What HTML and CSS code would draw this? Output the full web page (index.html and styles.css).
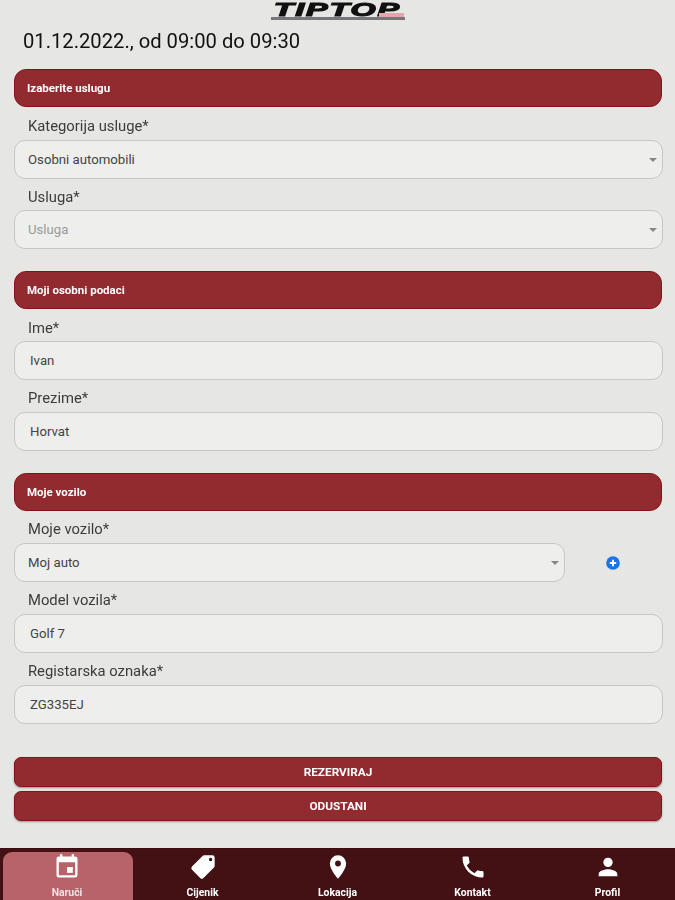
FILE: index.html
```html
<!DOCTYPE html>
<html lang="hr">
<head>
<meta charset="utf-8">
<title>Naruči</title>
<link rel="stylesheet" href="styles.css">
</head>
<body>
<div class="page">
  <main class="content">
    <header class="logo-row">
      <div class="logo"><span class="logo-text">TIPTOP</span><span class="logo-red"></span></div>
    </header>
    <h1 class="date">01.12.2022., od 09:00 do 09:30</h1>

    <section class="section">
      <h2 class="bar">Izaberite uslugu</h2>
      <div class="label">Kategorija usluge*</div>
      <div class="field"><span>Osobni automobili</span><i class="caret"></i></div>
      <div class="label">Usluga*</div>
      <div class="field muted"><span>Usluga</span><i class="caret"></i></div>
    </section>

    <section class="section">
      <h2 class="bar">Moji osobni podaci</h2>
      <div class="label">Ime*</div>
      <div class="field input"><span>Ivan</span></div>
      <div class="label">Prezime*</div>
      <div class="field input"><span>Horvat</span></div>
    </section>

    <section class="section">
      <h2 class="bar">Moje vozilo</h2>
      <div class="label">Moje vozilo*</div>
      <div class="vehicle-row">
        <div class="field grow"><span>Moj auto</span><i class="caret"></i></div>
        <div class="add-slot">
          <svg class="add" viewBox="0 0 14 14" width="14" height="14"><circle cx="7" cy="7" r="6.8" fill="#1a73e8"/><path d="M7 3.8v6.4M3.8 7h6.4" stroke="#fff" stroke-width="1.9"/></svg>
        </div>
      </div>
      <div class="label">Model vozila*</div>
      <div class="field input"><span>Golf 7</span></div>
      <div class="label tall">Registarska oznaka*</div>
      <div class="field input"><span>ZG335EJ</span></div>
    </section>

    <div class="actions">
      <button class="btn">REZERVIRAJ</button>
      <button class="btn">ODUSTANI</button>
    </div>
  </main>

  <nav class="tabs">
    <a class="tab active">
      <svg viewBox="0 0 24 24" width="28" height="28"><path fill="#fff" d="M19 3h-1V1h-2v2H8V1H6v2H5a2 2 0 0 0-2 2v14a2 2 0 0 0 2 2h14a2 2 0 0 0 2-2V5a2 2 0 0 0-2-2zm0 16H5V8h14v11z"/><rect x="12" y="12" width="5" height="5" fill="#fff"/></svg>
      <span>Naruči</span>
    </a>
    <a class="tab">
      <svg viewBox="0 0 24 24" width="28" height="28"><path fill="#fff" d="M21.41 11.58l-9-9A2 2 0 0 0 11 2H4a2 2 0 0 0-2 2v7c0 .55.22 1.05.59 1.42l9 9a2 2 0 0 0 2.82 0l7-7a2 2 0 0 0 0-2.84zM5.5 7A1.5 1.5 0 1 1 5.5 4a1.5 1.5 0 0 1 0 3z" transform="matrix(0 1 -1 0 24 0)"/></svg>
      <span>Cijenik</span>
    </a>
    <a class="tab">
      <svg viewBox="0 0 24 24" width="28" height="28"><path fill="#fff" d="M12 2a7 7 0 0 0-7 7c0 5.25 7 13 7 13s7-7.75 7-13a7 7 0 0 0-7-7zm0 9.5a2.5 2.5 0 1 1 0-5 2.5 2.5 0 0 1 0 5z"/></svg>
      <span>Lokacija</span>
    </a>
    <a class="tab">
      <svg viewBox="0 0 24 24" width="28" height="28"><path fill="#fff" d="M6.62 10.79a15.15 15.15 0 0 0 6.59 6.59l2.2-2.2a1 1 0 0 1 1.02-.24 11.4 11.4 0 0 0 3.57.57 1 1 0 0 1 1 1V20a1 1 0 0 1-1 1A17 17 0 0 1 3 4a1 1 0 0 1 1-1h3.5a1 1 0 0 1 1 1c0 1.25.2 2.45.57 3.57a1 1 0 0 1-.25 1.02l-2.2 2.2z"/></svg>
      <span>Kontakt</span>
    </a>
    <a class="tab">
      <svg viewBox="0 0 24 24" width="28" height="28"><path fill="#fff" d="M12 12a4 4 0 1 0 0-8 4 4 0 0 0 0 8zm0 2c-2.67 0-8 1.34-8 4v2h16v-2c0-2.66-5.33-4-8-4z"/></svg>
      <span>Profil</span>
    </a>
  </nav>
</div>
</body>
</html>
```
FILE: styles.css
```css
* { box-sizing: border-box; }
html, body { margin: 0; padding: 0; }
body { background: #e6e6e4; font-family: Roboto, "Liberation Sans", sans-serif; color: #222; }
.page { width: 675px; height: 900px; display: flex; flex-direction: column; overflow: hidden; filter: blur(0.5px); }
.content { flex: 1; padding: 0 12px 0 14px; }

.logo-row { height: 21px; display: flex; justify-content: center; padding-right: 2px; }
.logo { position: relative; width: 134px; height: 20px; padding-top: 1px; border-bottom: 3px solid #77777a; text-align: center; }
.logo-text { display: inline-block; font: italic 700 18px/16px "Liberation Sans", sans-serif; letter-spacing: 1px; color: #111; -webkit-text-stroke: 1.1px #111; transform: scaleX(1.8); }
.logo-red { position: absolute; right: 1px; bottom: 0; width: 25px; height: 4px; background: #e3a6ac; }

.date { margin: 9px 0 0 9px; height: 22px; font-size: 20.2px; line-height: 22px; font-weight: 400; color: #111; white-space: nowrap; }

.section { margin-bottom: 22px; }
.date + .section { margin-top: 17.2px; }
.bar { margin: 0; height: 38px; width: 648px; padding-left: 12px; display: flex; align-items: center; background: #922b30; border: 1px solid #8a1118; border-radius: 12px; color: #fff; font-size: 11.5px; font-weight: 700; }
.label { height: 31.5px; padding: 8px 0 0 14px; font-size: 14.8px; line-height: 20px; color: #3c3c3c; white-space: nowrap; }
.bar + .label { height: 32.4px; padding-top: 8.5px; }
.label.tall { height: 31.8px; }
.field { position: relative; display: flex; align-items: center; width: 649px; height: 39px; padding: 0 13px; background: #eeeeed; border: 1px solid #c6c6c4; border-radius: 11px; font-size: 13.2px; color: #444; }
.field.input { padding-left: 15px; }
.field.muted { color: #9a9a9a; }
.caret { position: absolute; right: 5px; top: 17px; width: 0; height: 0; border-left: 4px solid transparent; border-right: 4px solid transparent; border-top: 4px solid #85858a; }
.vehicle-row { display: flex; align-items: center; }
.field.grow { width: 551px; flex: none; }
.add-slot { flex: 1; display: flex; padding-left: 41px; }

.actions { display: flex; flex-direction: column; gap: 4px; margin-top: 33px; }
.btn { width: 648px; height: 30px; padding: 0; background: #922b30; border: 1px solid #8a1118; border-radius: 7px; color: #fff; font: 700 11.8px Roboto, "Liberation Sans", sans-serif; box-shadow: 0 1px 2px rgba(0,0,0,.35); }

.tabs { flex: none; height: 52px; background: #431114; display: grid; grid-template-columns: repeat(5, 135px); padding: 3px 0 0 0; border-top: 1px solid #3a0e10; }
.tab { display: flex; flex-direction: column; align-items: center; height: 48px; padding-top: 1px; border-radius: 9px 9px 0 0; color: #fff; font-size: 10.4px; font-weight: 700; text-align: center; }
.tab svg { display: block; margin-bottom: 6px; }
.tab span { line-height: 12px; }
.tab.active { background: #b8636a; color: #f4e3e4; margin-left: 3px; margin-right: 2px; padding-right: 2px; }
```
